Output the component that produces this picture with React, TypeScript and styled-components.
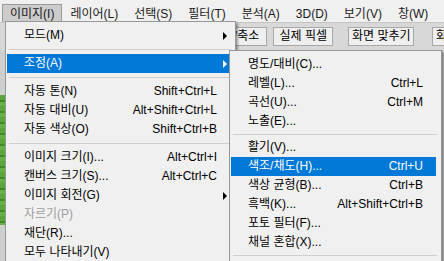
import React from 'react';
import styled, { createGlobalStyle } from 'styled-components';

type Entry =
  | { kind: 'item'; label: string; shortcut?: string; sub?: boolean; active?: boolean; disabled?: boolean }
  | { kind: 'sep' };

const topMenus = ['이미지(I)', '레이어(L)', '선택(S)', '필터(T)', '분석(A)', '3D(D)', '보기(V)', '창(W)'];

const imageMenu: Entry[] = [
  { kind: 'item', label: '모드(M)', sub: true },
  { kind: 'sep' },
  { kind: 'item', label: '조정(A)', sub: true, active: true },
  { kind: 'sep' },
  { kind: 'item', label: '자동 톤(N)', shortcut: 'Shift+Ctrl+L' },
  { kind: 'item', label: '자동 대비(U)', shortcut: 'Alt+Shift+Ctrl+L' },
  { kind: 'item', label: '자동 색상(O)', shortcut: 'Shift+Ctrl+B' },
  { kind: 'sep' },
  { kind: 'item', label: '이미지 크기(I)...', shortcut: 'Alt+Ctrl+I' },
  { kind: 'item', label: '캔버스 크기(S)...', shortcut: 'Alt+Ctrl+C' },
  { kind: 'item', label: '이미지 회전(G)', sub: true },
  { kind: 'item', label: '자르기(P)', disabled: true },
  { kind: 'item', label: '재단(R)...' },
  { kind: 'item', label: '모두 나타내기(V)' },
];

const adjustMenu: Entry[] = [
  { kind: 'item', label: '명도/대비(C)...' },
  { kind: 'item', label: '레벨(L)...', shortcut: 'Ctrl+L' },
  { kind: 'item', label: '곡선(U)...', shortcut: 'Ctrl+M' },
  { kind: 'item', label: '노출(E)...' },
  { kind: 'sep' },
  { kind: 'item', label: '활기(V)...' },
  { kind: 'item', label: '색조/채도(H)...', shortcut: 'Ctrl+U', active: true },
  { kind: 'item', label: '색상 균형(B)...', shortcut: 'Ctrl+B' },
  { kind: 'item', label: '흑백(K)...', shortcut: 'Alt+Shift+Ctrl+B' },
  { kind: 'item', label: '포토 필터(F)...' },
  { kind: 'item', label: '채널 혼합(X)...' },
  { kind: 'sep' },
];

const GlobalStyle = createGlobalStyle`
  html, body {
    margin: 0;
    padding: 0;
    background: #f0f0f0;
  }
  body {
    font-family: 'Liberation Sans', 'Noto Sans CJK KR', sans-serif;
    font-size: 12px;
    color: #000;
  }
`;

const Window = styled.div`
  position: relative;
  width: 444px;
  height: 261px;
  overflow: hidden;
  display: flex;
  flex-direction: column;
  background: #c9c9c9;
`;

const MenuBar = styled.div`
  display: flex;
  align-items: flex-end;
  height: 22px;
  padding-left: 2px;
  background: #f0f0f0;
`;

const MenuBarItem = styled.div<{ $open?: boolean }>`
  height: 18px;
  line-height: 18px;
  padding: 0 7px;
  box-sizing: border-box;
  white-space: nowrap;
  color: #1a1a1a;
  background: ${(p) => (p.$open ? '#cccccc' : 'transparent')};
  border: 1px solid ${(p) => (p.$open ? '#9a9a9a' : 'transparent')};
  border-bottom: none;
`;

const OptionsBar = styled.div`
  display: flex;
  align-items: flex-start;
  height: 28px;
  padding-top: 4px;
  box-sizing: border-box;
  background: #d8d8d8;
  border-top: 1px solid #c4c4c4;
`;

const ToolButton = styled.div<{ $w?: number; $ml: number }>`
  flex: none;
  width: ${(p) => (p.$w ? `${p.$w}px` : 'auto')};
  height: 19px;
  line-height: 17px;
  margin-left: ${(p) => p.$ml}px;
  padding: ${(p) => (p.$w ? '0' : '0 7px')};
  box-sizing: border-box;
  text-align: center;
  white-space: nowrap;
  background: #efefef;
  border: 1px solid #a8a8a8;
`;

const Workspace = styled.div`
  flex: 1;
  display: flex;
`;

const DocEdge = styled.div`
  width: 5px;
  padding-top: 45px;
  background: #cfcfcf;
  border-right: 1px solid #8a8a8a;
`;

const CanvasPeek = styled.div`
  height: 130px;
  background: repeating-linear-gradient(180deg, #5aa63b 0 5px, #3f8a2a 5px 7px, #66b045 7px 11px);
`;

const DropMenu = styled.div<{ $x: number; $y: number; $w: number; $pt: number }>`
  position: absolute;
  left: ${(p) => p.$x}px;
  top: ${(p) => p.$y}px;
  width: ${(p) => p.$w}px;
  box-sizing: border-box;
  padding: ${(p) => p.$pt}px 0 3px;
  background: #f0f0f0;
  border: 1px solid #979797;
  box-shadow: 2px 2px 2px rgba(0, 0, 0, 0.35);
`;

const Row = styled.div<{ $active?: boolean; $disabled?: boolean }>`
  display: grid;
  grid-template-columns: 1fr auto 13px;
  align-items: center;
  height: 19px;
  line-height: 19px;
  margin: 0 5px 0 1px;
  padding-left: 17px;
  white-space: nowrap;
  background: ${(p) => (p.$active ? '#0078d7' : 'transparent')};
  color: ${(p) => (p.$active ? '#ffffff' : p.$disabled ? '#9d9d9d' : '#000000')};
`;

const Shortcut = styled.span`
  text-align: right;
`;

const SubArrow = styled.span<{ $light?: boolean }>`
  justify-self: start;
  margin-left: 6px;
  width: 0;
  height: 0;
  border-top: 4px solid transparent;
  border-bottom: 4px solid transparent;
  border-left: 4px solid ${(p) => (p.$light ? '#ffffff' : '#000000')};
`;

const Separator = styled.div<{ $h: number }>`
  height: ${(p) => p.$h}px;
  display: flex;
  align-items: center;
  margin: 0 4px 0 3px;

  &::after {
    content: '';
    flex: 1;
    height: 1px;
    background: #cfcfcf;
  }
`;

const MenuList: React.FC<{ entries: Entry[]; sepH: number }> = ({ entries, sepH }) => (
  <>
    {entries.map((e, i) =>
      e.kind === 'sep' ? (
        <Separator key={i} $h={sepH} />
      ) : (
        <Row key={i} $active={e.active} $disabled={e.disabled}>
          <span>{e.label}</span>
          <Shortcut>{e.shortcut ?? ''}</Shortcut>
          {e.sub ? <SubArrow $light={e.active} /> : <span />}
        </Row>
      )
    )}
  </>
);

export default function App() {
  return (
    <>
      <GlobalStyle />
      <Window>
        <MenuBar>
          {topMenus.map((m, i) => (
            <MenuBarItem key={m} $open={i === 0}>
              {m}
            </MenuBarItem>
          ))}
        </MenuBar>
        <OptionsBar>
          <ToolButton $ml={164}>모든 창 확대/축소</ToolButton>
          <ToolButton $w={60} $ml={6}>실제 픽셀</ToolButton>
          <ToolButton $w={66} $ml={15}>화면 맞추기</ToolButton>
          <ToolButton $w={66} $ml={18}>화면 채우기</ToolButton>
        </OptionsBar>
        <Workspace>
          <DocEdge>
            <CanvasPeek />
          </DocEdge>
        </Workspace>

        <DropMenu $x={5} $y={21} $w={231} $pt={4}>
          <MenuList entries={imageMenu} sepH={9} />
        </DropMenu>
        <DropMenu $x={229} $y={50} $w={213} $pt={4}>
          <MenuList entries={adjustMenu} sepH={7} />
        </DropMenu>
      </Window>
    </>
  );
}
